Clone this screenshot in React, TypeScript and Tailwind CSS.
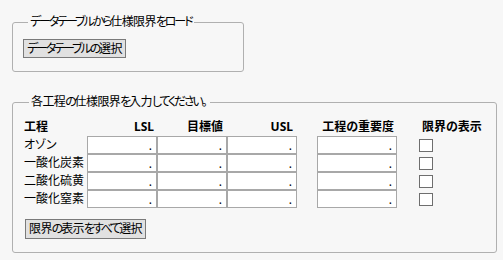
const processes = ["オゾン", "一酸化炭素", "二酸化硫黄", "一酸化窒素"];

// Meiryo UI kana are much narrower than Noto's, so tighten them char by char
const Jp = ({ text }: { text: string }) => (
  <>
    {Array.from(text).map((ch, i) => {
      if (/[\u30a0-\u30ff]/.test(ch)) return <span key={i} className="tracking-[-2.1px]">{ch}</span>;
      if (/[\u3040-\u309f]/.test(ch)) return <span key={i} className="tracking-[-2.2px]">{ch}</span>;
      if (ch === "。") return <span key={i}>{ch}</span>;
      return <span key={i} className="tracking-[-0.6px]">{ch}</span>;
    })}
  </>
);

const Cell = ({ w }: { w: string }) => (
  <div className={`${w} h-[18px] border border-[#a8a8a8] bg-white flex items-end justify-end pr-[4px] text-[12px] leading-[14px]`}>
    .
  </div>
);

export default function App() {
  return (
    <div className="w-[503px] h-[260px] bg-[#f7f7f7] text-black pt-[14px] pl-[12px] font-['Noto_Sans','Noto_Sans_CJK_JP',sans-serif] text-[12px] leading-[16px] [font-feature-settings:'palt']">
      <fieldset className="w-[232px] border border-[#b0b0b0] rounded-[3px] pl-[10px] pb-[13px]">
        <legend className="ml-[5px] px-[2px] leading-[16px]">
          <Jp text="データテーブルから仕様限界をロード" />
        </legend>
        <button className="mt-[9px] h-[19px] px-[3px] bg-[#e1e1e1] border border-[#7a7a7a] leading-[17px]">
          <Jp text="データテーブルの選択" />
        </button>
      </fieldset>

      <fieldset className="mt-[22px] w-[485px] border border-[#b0b0b0] rounded-[3px] pl-[11px] pb-[13px]">
        <legend className="ml-[5px] px-[2px] leading-[16px]">
          <Jp text="各工程の仕様限界を入力してください。" />
        </legend>
        <div className="mt-[9px] grid grid-cols-[63px_70px_70px_70px_20px_80px_22px_auto]">
          <div className="h-[16px] font-bold">工程</div>
          <div className="h-[16px] font-bold text-right pr-[3px]">LSL</div>
          <div className="h-[16px] font-bold text-right pr-[4px]">目標値</div>
          <div className="h-[16px] font-bold text-right pr-[4px]">USL</div>
          <div />
          <div className="h-[16px] font-bold text-right pr-[3px]">工程の重要度</div>
          <div />
          <div className="h-[16px] font-bold pl-[3px] mb-[1px]">限界の表示</div>
          {processes.map((p) => (
            <div key={p} className="contents">
              <div className="h-[18px] leading-[18px]">{p}</div>
              <Cell w="w-[70px]" />
              <Cell w="w-[70px]" />
              <Cell w="w-[70px]" />
              <div />
              <Cell w="w-[80px]" />
              <div />
              <div className="h-[18px] pt-[3px]">
                <div className="w-[14px] h-[13px] border border-[#6e6e6e] bg-white" />
              </div>
            </div>
          ))}
        </div>
        <button className="mt-[11px] ml-[1px] h-[20px] px-[3px] bg-[#e1e1e1] border border-[#7a7a7a] leading-[18px]">
          <Jp text="限界の表示をすべて選択" />
        </button>
      </fieldset>
    </div>
  );
}
